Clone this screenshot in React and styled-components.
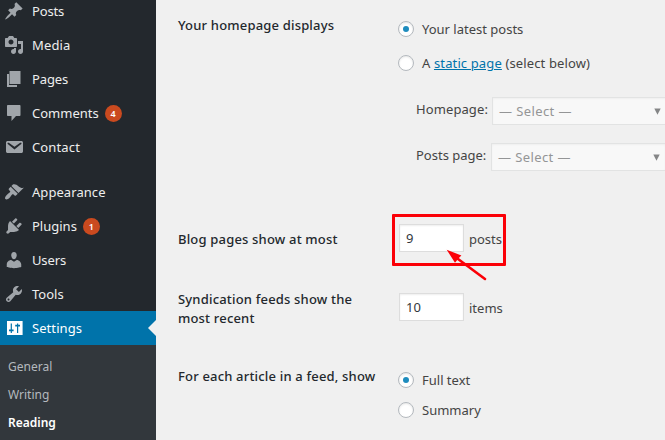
import React from "react";
import styled, { createGlobalStyle, css } from "styled-components";

const GlobalStyle = createGlobalStyle`
  * { box-sizing: border-box; }
  body {
    margin: 0;
    overflow: hidden;
    background: #f0f0f0;
    font-family: "Noto Sans", "Open Sans", sans-serif;
    font-size: 13px;
    color: #444;
  }
`;

const Page = styled.div`
  display: flex;
  width: 665px;
  height: 440px;
  overflow: hidden;
`;

const Sidebar = styled.nav`
  flex: none;
  width: 156px;
  height: 440px;
  overflow: hidden;
  background: #23282d;
`;

const MenuList = styled.div`
  display: flex;
  flex-direction: column;
  margin-top: -6px;
`;

const MenuItem = styled.a`
  position: relative;
  display: flex;
  flex: none;
  align-items: center;
  height: 34px;
  padding-left: 4px;
  margin-top: ${(p) => (p.$separated ? 11 : 0)}px;
  color: ${(p) => (p.$current ? "#fff" : "#eee")};
  background: ${(p) => (p.$current ? "#0073aa" : "transparent")};
  ${(p) =>
    p.$current &&
    css`
      &::after {
        content: "";
        position: absolute;
        right: 0;
        top: 9px;
        border: 8px solid transparent;
        border-left: 0;
        border-right-color: #f0f0f0;
      }
    `}
`;

const MenuIcon = styled.svg`
  flex: none;
  width: 20px;
  height: 20px;
  margin-right: 8px;
  fill: ${(p) => (p.$current ? "#fff" : "#a0a5aa")};
`;

const MenuLabel = styled.span`
  line-height: 18px;
  letter-spacing: ${(p) => p.$tracking || 0}px;
`;

const Badge = styled.span`
  display: flex;
  align-items: center;
  justify-content: center;
  width: 17px;
  height: 17px;
  margin-left: 6px;
  border-radius: 50%;
  background: #ca4a1f;
  color: #fff;
  font-size: 9px;
  font-weight: 600;
  line-height: 17px;
`;

const SubMenu = styled.div`
  display: flex;
  flex-direction: column;
  height: 100px;
  padding: 8px 0 0 8px;
  background: #32373c;
`;

const SubItem = styled.a`
  height: 28px;
  line-height: 28px;
  font-size: 12px;
  font-weight: ${(p) => (p.$current ? 600 : 400)};
  color: ${(p) => (p.$current ? "#fff" : "#b4b9be")};
`;

const Content = styled.main`
  flex: 1;
  min-width: 0;
  padding-left: 22px;
`;

const FormRow = styled.section`
  display: grid;
  grid-template-columns: 220px 1fr;
  height: ${(p) => p.$height}px;
`;

const RowTitle = styled.h2`
  margin: 0;
  padding-top: ${(p) => p.$top}px;
  font-size: 13px;
  font-weight: 500;
  line-height: 19px;
  letter-spacing: 0.18px;
  color: #23282d;
`;

const Controls = styled.div`
  display: flex;
  flex-direction: column;
  padding-top: ${(p) => p.$top}px;
  gap: ${(p) => p.$gap || 0}px;
`;

const RadioLabel = styled.label`
  display: flex;
  align-items: center;
  height: 16px;
  gap: 8px;
  line-height: 16px;
  letter-spacing: ${(p) => p.$tracking || 0}px;
  white-space: pre;
`;

const Radio = styled.span`
  display: flex;
  align-items: center;
  justify-content: center;
  flex: none;
  width: 16px;
  height: 16px;
  border: 1px solid #b4b9be;
  border-radius: 50%;
  background: #fff;
  box-shadow: inset 0 1px 2px rgba(0, 0, 0, 0.1);
  &::before {
    content: "";
    width: 6px;
    height: 6px;
    border-radius: 50%;
    background: ${(p) => (p.$checked ? "#1e8cbe" : "transparent")};
  }
`;

const Link = styled.a`
  color: #0073aa;
  text-decoration: underline;
`;

const SelectGroup = styled.div`
  display: flex;
  flex-direction: column;
  gap: 18px;
  margin-top: 8px;
  padding-left: 18px;
`;

const SelectRow = styled.div`
  display: flex;
  height: 28px;
`;

const SelectLabel = styled.span`
  flex: none;
  width: ${(p) => p.$width}px;
  line-height: 25px;
  letter-spacing: ${(p) => p.$tracking || 0}px;
`;

const SelectBox = styled.div`
  display: flex;
  flex: none;
  align-items: center;
  justify-content: space-between;
  width: 175px;
  height: 28px;
  padding: 0 5px 0 6px;
  border: 1px solid #e2e3e3;
  background: #f8f8f8;
  box-shadow: inset 0 1px 2px rgba(0, 0, 0, 0.04);
  color: #949596;
  letter-spacing: 0.4px;
`;

const Caret = styled.svg`
  width: 7px;
  height: 7px;
  fill: #858687;
`;

const FieldRow = styled.div`
  position: relative;
  display: flex;
  align-items: center;
  height: 28px;
  gap: 5px;
  padding-left: 1px;
`;

const NumberField = styled.span`
  width: 65px;
  height: 28px;
  padding-left: 6px;
  border: 1px solid #ddd;
  background: #fff;
  box-shadow: inset 0 1px 2px rgba(0, 0, 0, 0.07);
  line-height: 27px;
  color: #32373c;
`;

const Unit = styled.span`
  line-height: 18px;
  padding-top: 2px;
`;

const Highlight = styled.div`
  position: absolute;
  left: -6px;
  top: -10px;
  width: 114px;
  height: 52px;
  border: 3px solid #fb0007;
  border-radius: 1px;
`;

const Pointer = styled.svg`
  position: absolute;
  left: 47px;
  top: 24px;
  width: 44px;
  height: 36px;
`;

const ICONS = {
  post: "M10.44 3.02l1.82-1.82 6.36 6.35-1.83 1.82c-1.05-.68-2.48-.57-3.41.36l-.75.75c-.92.93-1.04 2.35-.35 3.41l-1.83 1.82-2.41-2.41-2.8 2.79c-.42.42-3.38 2.71-3.8 2.29s1.86-3.39 2.28-3.81l2.79-2.79L4.1 9.36l1.83-1.82c1.05.69 2.48.57 3.4-.36l.75-.75c.93-.92 1.05-2.35.36-3.41z",
  media: "M13 11V4c0-.55-.45-1-1-1h-1.67L9 1H5L3.67 3H2c-.55 0-1 .45-1 1v7c0 .55.45 1 1 1h10c.55 0 1-.45 1-1zM7 4.5c1.38 0 2.5 1.12 2.5 2.5S8.38 9.5 7 9.5 4.5 8.38 4.5 7 5.62 4.5 7 4.5zM14 6h5v10.5c0 1.38-1.12 2.5-2.5 2.5S14 17.88 14 16.5s1.12-2.5 2.5-2.5c.17 0 .34.02.5.05V9h-3V6zm-4 8.05V13h2v3.5c0 1.38-1.12 2.5-2.5 2.5S7 17.88 7 16.5 8.12 14 9.5 14c.17 0 .34.02.5.05z",
  page: "M5.5 15V2h11v13h-11zM5 16h8v2H3V5h2v11z",
  comments: "M4 2h11.5c.6 0 1 .4 1 1v9c0 .6-.4 1-1 1H12l-4.5 5v-5H4c-.6 0-1-.4-1-1V3c0-.6.4-1 1-1z",
  email: "M3.87 4h13.25C18.37 4 19 4.59 19 5.79v8.42c0 1.19-.63 1.79-1.88 1.79H3.87c-1.25 0-1.88-.6-1.88-1.79V5.79c0-1.2.63-1.79 1.88-1.79zm6.62 8.6l6.74-5.53c.24-.2.43-.66.13-1.07-.29-.41-.82-.42-1.17-.17l-5.7 3.86L4.8 5.83c-.35-.25-.88-.24-1.17.17-.3.41-.11.87.13 1.07z",
  appearance: "M14.48 11.06L7.41 3.99l1.5-1.5c.5-.56 2.3-.47 3.51.32 1.21.8 1.43 1.28 2.91 2.1 1.18.64 2.45 1.26 4.45.85zm-.71.71L6.7 4.7 4.93 6.47c-.39.39-.39 1.02 0 1.41l1.06 1.06c.39.39.39 1.03 0 1.42-.6.6-1.43 1.11-2.21 1.69-.35.26-.7.53-1.01.84C1.43 14.23.4 16.08 1.4 17.07c.99 1 2.84-.03 4.18-1.36.31-.31.58-.66.85-1.02.57-.78 1.08-1.61 1.69-2.21.39-.39 1.02-.39 1.41 0l1.06 1.06c.39.39 1.02.39 1.41 0z",
  plugins: "M13.11 4.36L9.87 7.6 8 5.73l3.24-3.24c.35-.34 1.05-.2 1.56.32.52.51.66 1.21.31 1.55zm-8 1.77l.91-1.12 9.01 9.01-1.19.84c-.71.71-2.63 1.16-3.82 1.16H6.14L4.9 17.26c-.59.59-1.54.59-2.12 0-.59-.58-.59-1.53 0-2.12l1.24-1.24v-3.88c0-1.13.4-3.19 1.09-3.89zm7.26 3.97l3.24-3.24c.34-.35 1.04-.21 1.55.31.52.51.66 1.21.31 1.55l-3.24 3.25z",
  users: "M10 9.25c-2.27 0-2.73-3.44-2.73-3.44C7 4.02 7.82 2 9.97 2c2.16 0 2.98 2.02 2.71 3.81 0 0-.41 3.44-2.68 3.44zm0 2.57L12.72 10c2.39 0 4.52 2.33 4.52 4.53v2.49s-3.65 1.13-7.24 1.13c-3.65 0-7.24-1.13-7.24-1.13v-2.49c0-2.25 1.94-4.48 4.47-4.48z",
  tools: "M16.68 9.77c-1.34 1.34-3.3 1.67-4.95.99l-5.41 6.52c-.99.99-2.59.99-3.58 0s-.99-2.59 0-3.57l6.52-5.42c-.68-1.65-.35-3.61.99-4.95 1.28-1.28 3.12-1.62 4.72-1.06l-2.89 2.89 2.82 2.82 2.86-2.87c.53 1.58.18 3.39-1.08 4.65zM3.81 16.21c.4.39 1.04.39 1.43 0 .4-.4.4-1.04 0-1.43-.39-.4-1.03-.4-1.43 0-.39.39-.39 1.03 0 1.43z",
  settings: "M3 3h15.6v14H3zM6.7 5.5v6H5v1.7h1.7V15h1.2v-1.8h1.7v-1.7H7.9v-6zM13 5.5v1.2h-1.8v1.7H13V15h1.2V8.4H16V6.7h-1.8V5.5z",
};

const MENU = [
  { label: "Posts", icon: "post", tracking: -0.15 },
  { label: "Media", icon: "media", tracking: 0.15 },
  { label: "Pages", icon: "page", tracking: -0.1 },
  { label: "Comments", icon: "comments", badge: 4 },
  { label: "Contact", icon: "email", tracking: 0.14 },
  { label: "Appearance", icon: "appearance", tracking: 0.06, separated: true },
  { label: "Plugins", icon: "plugins", badge: 1 },
  { label: "Users", icon: "users", tracking: -0.13 },
  { label: "Tools", icon: "tools" },
  { label: "Settings", icon: "settings", tracking: 0.07, current: true },
];

function SelectField({ label, width, tracking }) {
  return (
    <SelectRow>
      <SelectLabel $width={width} $tracking={tracking}>{label}</SelectLabel>
      <SelectBox>
        <span>— Select —</span>
        <Caret viewBox="0 0 7 7"><path d="M0.3 0.5h6.4L3.5 6.7z" /></Caret>
      </SelectBox>
    </SelectRow>
  );
}

export default function App() {
  return (
    <Page>
      <GlobalStyle />
      <Sidebar>
        <MenuList>
          {MENU.map((m) => (
            <MenuItem key={m.label} $current={m.current} $separated={m.separated}>
              <MenuIcon viewBox="0 0 20 20" $current={m.current}>
                <path fillRule="evenodd" d={ICONS[m.icon]} />
              </MenuIcon>
              <MenuLabel $tracking={m.tracking}>{m.label}</MenuLabel>
              {m.badge && <Badge>{m.badge}</Badge>}
            </MenuItem>
          ))}
        </MenuList>
        <SubMenu>
          <SubItem>General</SubItem>
          <SubItem>Writing</SubItem>
          <SubItem $current>Reading</SubItem>
        </SubMenu>
      </Sidebar>
      <Content>
        <FormRow $height={209}>
          <RowTitle $top={16}>Your homepage displays</RowTitle>
          <Controls $top={21} $gap={18}>
            <RadioLabel><Radio $checked />Your latest posts</RadioLabel>
            <RadioLabel $tracking={0.13}>
              <Radio />
              <span>A <Link>static page</Link> (select below)</span>
            </RadioLabel>
            <SelectGroup>
              <SelectField label="Homepage:" width={76} tracking={0.1} />
              <SelectField label="Posts page:" width={75} />
            </SelectGroup>
          </Controls>
        </FormRow>
        <FormRow $height={69}>
          <RowTitle $top={21}>Blog pages show at most</RowTitle>
          <Controls $top={15}>
            <FieldRow>
              <NumberField>9</NumberField>
              <Unit>posts</Unit>
              <Highlight />
              <Pointer viewBox="0 0 44 36">
                <path d="M11 9.5L40 31" stroke="#fb0007" strokeWidth="2.6" strokeLinecap="round" />
                <path d="M1.7 1.8L16.4 7.5L13.4 10.6L10 14.8z" fill="#fb0007" />
              </Pointer>
            </FieldRow>
          </Controls>
        </FormRow>
        <FormRow $height={77}>
          <RowTitle $top={12}>Syndication feeds show the<br />most recent</RowTitle>
          <Controls $top={15}>
            <FieldRow>
              <NumberField>10</NumberField>
              <Unit>items</Unit>
            </FieldRow>
          </Controls>
        </FormRow>
        <FormRow $height={85}>
          <RowTitle $top={12}>For each article in a feed, show</RowTitle>
          <Controls $top={17} $gap={14}>
            <RadioLabel><Radio $checked />Full text</RadioLabel>
            <RadioLabel><Radio />Summary</RadioLabel>
          </Controls>
        </FormRow>
      </Content>
    </Page>
  );
}
